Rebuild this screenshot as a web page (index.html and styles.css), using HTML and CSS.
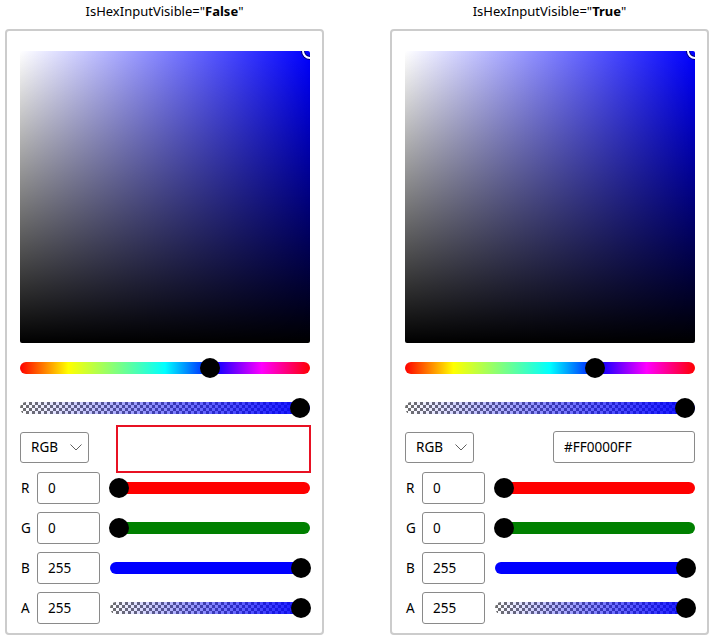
FILE: index.html
```html
<!DOCTYPE html>
<html>
<head>
<meta charset="utf-8">
<link rel="stylesheet" href="styles.css">
</head>
<body>
<div class="page">
  <div class="col">
    <div class="title">IsHexInputVisible="<b>False</b>"</div>
    <div class="panel">
      <div class="spectrum"><span class="spec-handle"></span></div>
      <div class="slider hue"><span class="track"></span><span class="thumb" style="left:180px"></span></div>
      <div class="slider alpha"><span class="track"></span><span class="thumb" style="left:270px"></span></div>
      <div class="mode-row">
        <div class="combo"><span>RGB</span><svg class="chev" width="12" height="7" viewBox="0 0 12 7"><path d="M0.5 0.5 L6 6 L11.5 0.5" fill="none" stroke="#606060" stroke-width="1"/></svg></div>
        <div class="missing"></div>
      </div>
      <div class="chan"><span class="lbl">R</span><div class="box">0</div><div class="slider cs red"><span class="track"></span><span class="thumb" style="left:0px"></span></div></div>
      <div class="chan"><span class="lbl">G</span><div class="box">0</div><div class="slider cs green"><span class="track"></span><span class="thumb" style="left:0px"></span></div></div>
      <div class="chan"><span class="lbl">B</span><div class="box">255</div><div class="slider cs blue"><span class="track"></span><span class="thumb" style="left:182px"></span></div></div>
      <div class="chan"><span class="lbl">A</span><div class="box">255</div><div class="slider cs alpha"><span class="track"></span><span class="thumb" style="left:182px"></span></div></div>
    </div>
  </div>
  <div class="col">
    <div class="title">IsHexInputVisible="<b>True</b>"</div>
    <div class="panel">
      <div class="spectrum"><span class="spec-handle"></span></div>
      <div class="slider hue"><span class="track"></span><span class="thumb" style="left:180px"></span></div>
      <div class="slider alpha"><span class="track"></span><span class="thumb" style="left:270px"></span></div>
      <div class="mode-row">
        <div class="combo"><span>RGB</span><svg class="chev" width="12" height="7" viewBox="0 0 12 7"><path d="M0.5 0.5 L6 6 L11.5 0.5" fill="none" stroke="#606060" stroke-width="1"/></svg></div>
        <div class="box hex">#FF0000FF</div>
      </div>
      <div class="chan"><span class="lbl">R</span><div class="box">0</div><div class="slider cs red"><span class="track"></span><span class="thumb" style="left:0px"></span></div></div>
      <div class="chan"><span class="lbl">G</span><div class="box">0</div><div class="slider cs green"><span class="track"></span><span class="thumb" style="left:0px"></span></div></div>
      <div class="chan"><span class="lbl">B</span><div class="box">255</div><div class="slider cs blue"><span class="track"></span><span class="thumb" style="left:182px"></span></div></div>
      <div class="chan"><span class="lbl">A</span><div class="box">255</div><div class="slider cs alpha"><span class="track"></span><span class="thumb" style="left:182px"></span></div></div>
    </div>
  </div>
</div>
</body>
</html>
```
FILE: styles.css
```css
html, body {
  margin: 0;
  padding: 0;
  background: #ffffff;
}
body {
  font-family: "Noto Sans", "Open Sans", sans-serif;
  color: #000000;
}
.page {
  display: flex;
  gap: 66px;
  padding-left: 5px;
}
.col {
  width: 319px;
  display: flex;
  flex-direction: column;
}
.title {
  height: 29px;
  line-height: 23px;
  font-size: 13px;
  text-align: center;
}
.title b {
  font-weight: 700;
}
.panel {
  box-sizing: border-box;
  height: 606px;
  border: 2px solid #cccccc;
  border-radius: 4px;
  padding: 20px 12px 9px 13px;
  display: flex;
  flex-direction: column;
}
.spectrum {
  position: relative;
  overflow: hidden;
  width: 290px;
  height: 292px;
  border-radius: 2px;
  background:
    linear-gradient(to bottom, rgba(0,0,0,0), #000000),
    linear-gradient(to right, #ffffff, #0000ff);
}
.spec-handle {
  position: absolute;
  right: -8px;
  top: -8px;
  width: 12px;
  height: 12px;
  border: 2px solid #ffffff;
  border-radius: 50%;
  box-shadow: 0 0 0 1px rgba(0,0,0,0.6), inset 0 0 0 1px rgba(0,0,0,0.6);
}
.slider {
  position: relative;
  height: 20px;
  width: 290px;
}
.slider .track {
  position: absolute;
  left: 0;
  right: 0;
  top: 4px;
  height: 12px;
  border-radius: 6px;
}
.slider .thumb {
  position: absolute;
  top: 0;
  width: 20px;
  height: 20px;
  border-radius: 50%;
  background: #000000;
}
.hue {
  margin-top: 15px;
}
.hue .track {
  background: linear-gradient(to right, #ff0000 0%, #ffff00 16.67%, #00ffff 50%, #0000ff 66.67%, #ff00ff 83.33%, #ff0000 100%);
}
.panel > .alpha {
  margin-top: 20px;
}
.alpha .track {
  background:
    linear-gradient(to right, rgba(0,0,255,0), rgba(0,0,255,0.95)),
    repeating-conic-gradient(#707070 0% 25%, #ffffff 0% 50%) 0 0 / 6px 6px;
}
.mode-row {
  position: relative;
  margin-top: 13px;
  height: 32px;
  display: flex;
  justify-content: space-between;
  align-items: center;
}
.combo {
  box-sizing: border-box;
  width: 69px;
  height: 31px;
  border: 1px solid #8a8a8a;
  border-radius: 3px;
  display: flex;
  align-items: center;
  padding-left: 10px;
  font-size: 13.5px;
  gap: 12px;
}
.chev {
  display: block;
}
.missing {
  position: absolute;
  left: 96px;
  top: -6px;
  width: 195px;
  height: 48px;
  box-sizing: border-box;
  border: 2px solid #e81123;
}
.box {
  box-sizing: border-box;
  width: 63px;
  height: 32px;
  border: 1px solid #8a8a8a;
  border-radius: 3px;
  padding-left: 10px;
  font-size: 13.5px;
  line-height: 30px;
}
.box.hex {
  width: 142px;
  padding-left: 10px;
}
.chan {
  display: flex;
  align-items: center;
  height: 32px;
  margin-top: 8px;
}
.mode-row + .chan {
  margin-top: 9px;
}
.lbl {
  width: 17px;
  font-size: 13.5px;
  padding-left: 1px;
  box-sizing: border-box;
}
.cs {
  width: 202px;
  margin-left: 9px;
}
.cs .track {
  left: 1px;
}
.red .track {
  background: #ff0000;
}
.green .track {
  background: #008000;
}
.blue .track {
  background: #0000ff;
}
```
